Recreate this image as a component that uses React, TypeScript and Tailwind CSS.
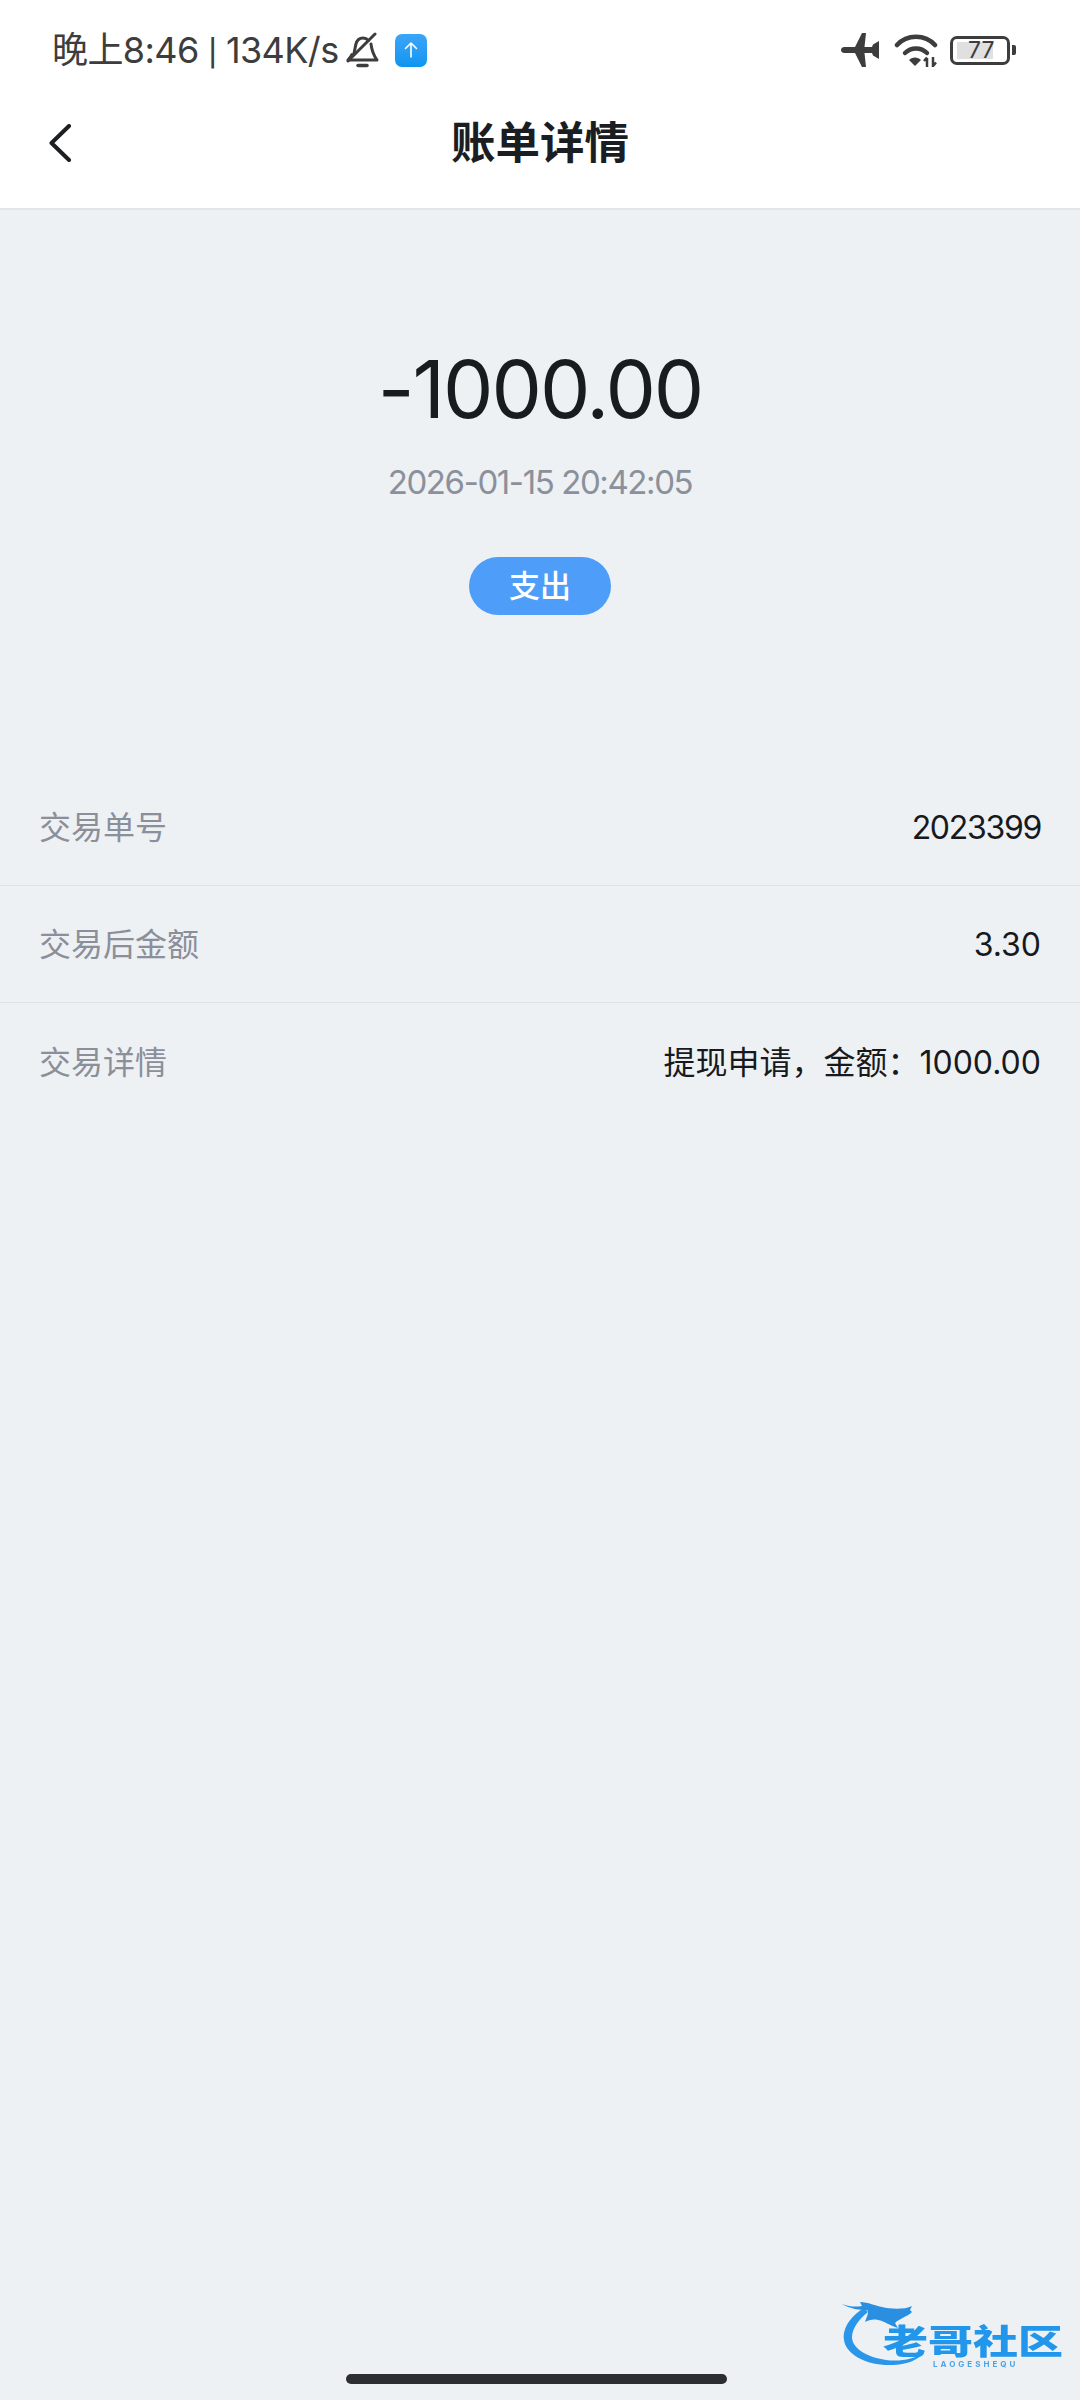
const cjk = "font-['Inter','Noto_Sans_CJK_SC',sans-serif]";

const rows = [
  { label: '交易单号', value: '2023399', spacing: 'tracking-[-1.300px]' },
  { label: '交易后金额', value: '3.30', spacing: 'tracking-normal' },
  { label: '交易详情', value: '提现申请，金额：1000.00', spacing: 'tracking-normal' },
];

function StatusBar() {
  return (
    <div className="flex h-[100px] items-center justify-between pl-[52px] pr-[64px] text-[#3d3d3d]">
      <div className="flex items-center">
        <span className="whitespace-pre text-[36px] leading-none tracking-[-0.6px]">
          晚上8:46 <span className="font-['Roboto']">|</span> 134K/s
        </span>
        {/* muted bell */}
        <svg className="ml-[7px] h-[36px] w-[33px]" viewBox="0 0 33 36" fill="none" stroke="#3d3d3d" strokeWidth="3" strokeLinecap="round" strokeLinejoin="round">
          <path d="M8 21c1-3 1-6 2-9 1-4 4-6 7-6 2 0 4 .8 5.500 2.500" />
          <path d="M25 12c.5 4 1 9 6 16H2c1.500-1.500 3-3.500 4-5.500" />
          <path d="M2 29 29 2" />
          <path d="M12 33.500h9" strokeWidth="3.500" />
        </svg>
        {/* upload notification */}
        <div className="ml-[16px] flex h-[33px] w-[32px] items-center justify-center rounded-[7px] bg-gradient-to-b from-[#3aa5f8] to-[#0a95f0]">
          <svg className="h-[20px] w-[20px]" viewBox="0 0 20 20" fill="none" stroke="#ffffff" strokeWidth="1.600" strokeLinecap="round" strokeLinejoin="round">
            <path d="M10 17V3M4.500 8.500 10 3l5.500 5.500" />
          </svg>
        </div>
      </div>
      <div className="flex items-center">
        {/* airplane */}
        <svg className="h-[34px] w-[38px]" viewBox="0 0 38 34" fill="#3d3d3d">
          <path d="M0 17c0-1.800 1.500-3 3.500-3H14L21 0h4l-1.500 14H31l1-2.500L38 8v18l-6-3.500L31 20h-7.500L25 34h-4l-7-14H3.500C1.500 20 0 18.800 0 17z" />
        </svg>
        {/* wifi */}
        <svg className="ml-[15px] h-[33px] w-[44px]" viewBox="0 0 44 33" fill="none" stroke="#3d3d3d" strokeWidth="4.500" strokeLinecap="round">
          <path d="M3 11C13 0 31 0 41 11" />
          <path d="M11 19c6-6 16-6 22 0" />
          <path d="M15 26c3-3.500 9-3.500 12 0l-6 6z" fill="#3d3d3d" stroke="none" />
          <path d="M33 33v-9M30 27l3-3.500M39 23v9l3-3.500" strokeWidth="2.500" strokeLinecap="butt" />
        </svg>
        {/* battery */}
        <div className="relative ml-[12px] flex h-[29px] w-[60px] items-center rounded-[7px] border-[3px] border-[#3d3d3d] pl-[4px]">
          <div className="h-[17px] w-[36px] bg-[#e0e0e0]" />
          <span className="absolute left-[15px] top-0 text-[23px] leading-[23px] text-[#3d3d3d]">77</span>
        </div>
        <div className="ml-[2px] h-[10px] w-[4px] rounded-r-[2px] bg-[#3d3d3d]" />
      </div>
    </div>
  );
}

function Logo() {
  return (
    <div className="absolute left-[840px] top-[2300px] h-[80px] w-[230px] blur-[0.5px]">
      <svg className="absolute left-0 top-0 h-[80px] w-[110px]" viewBox="0 0 110 80" fill="none">
        <path d="M24 8c-10 6-22 18-20 32 2 15 24 26 48 25 14 0 26-5 32-12-10 6-24 9-38 7C26 57 12 48 12 37c0-9 8-19 16-25z" fill="#2a96ea" />
        <path d="M2 4c8 3 14 3 20 2l-2-4c8 0 16 4 22 5 8 2 22 3 30-1l-2 4 2 2c-5 5-12 6-17 11l3 5c-8-2-13-7-20-8-5-1-9 0-13 2C28 14 29 12 27 10 20 10 10 9 2 4z" fill="#2a8fe0" />
      </svg>
      <div className="absolute left-[43px] top-[25px] origin-center scale-y-[0.75] whitespace-nowrap text-[45px] font-black leading-[34px] text-[#2196ea]">老哥社区</div>
      <div className="absolute left-[93px] top-[59px] whitespace-nowrap text-[8px] font-bold leading-[10px] tracking-[3px] text-[#4aa3e6]">LAOGESHEQU</div>
    </div>
  );
}

export default function App() {
  return (
    <div className={`relative flex h-[2400px] w-[1080px] flex-col overflow-hidden bg-[#edf1f4] ${cjk}`}>
      <header className="h-[210px] border-b-2 border-[#e2e5e9] bg-white">
        <StatusBar />
        <div className="relative flex h-[86px] items-center justify-center">
          <svg className="absolute left-[48px] top-[24px] h-[38px] w-[24px]" viewBox="0 0 24 38" fill="none" stroke="#1c1f23" strokeWidth="4" strokeLinecap="round" strokeLinejoin="round">
            <path d="M21 2 3.500 19 21 36" />
          </svg>
          <h1 className="text-[44.500px] font-semibold leading-none text-[#1a1d21]">账单详情</h1>
        </div>
      </header>

      <section className="flex flex-col items-center pt-[133px]">
        <div className="text-[80px] leading-[92px] tracking-[-2px] text-[#181c20]">-1000.00</div>
        <div className="mt-[28px] text-[33px] leading-[38px] tracking-[-1.400px] text-[#8b909b]">2026-01-15 20:42:05</div>
        <div className="mt-[56px] flex h-[58px] w-[142px] items-center justify-center rounded-full bg-[#4e9df8] text-[31px] font-medium text-white">支出</div>
      </section>

      <section className="mt-[154px]">
        {rows.map((row, i) => (
          <div key={row.label} className={`flex h-[117px] items-center justify-between px-[39px] pt-[2px] text-[32px] ${i < rows.length - 1 ? 'border-b border-[#dfe2e6]' : ''}`}>
            <span className="text-[#8b8f99]">{row.label}</span>
            <span className={`text-[#17191c] ${row.spacing}`}>{row.value}</span>
          </div>
        ))}
      </section>

      <Logo />
      <div className="absolute left-[346px] top-[2374px] h-[10px] w-[381px] rounded-full bg-[#2d2e30]" />
    </div>
  );
}
